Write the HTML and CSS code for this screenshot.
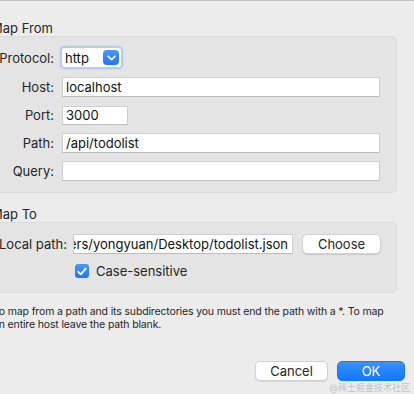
FILE: index.html
```html
<!DOCTYPE html>
<html>
<head>
<meta charset="utf-8">
<link rel="stylesheet" href="styles.css">
</head>
<body>
<div class="dialog">
  <div class="section-title">Map From</div>
  <div class="group">
    <div class="form from">
      <label class="lbl">Protocol:</label>
      <div class="field">
        <div class="select">
          <span class="select-val">http</span>
          <span class="select-btn">
            <svg width="9" height="6" viewBox="0 0 9 6"><path d="M1 1.2 L4.5 4.6 L8 1.2" fill="none" stroke="#fff" stroke-width="1.6" stroke-linecap="round" stroke-linejoin="round"/></svg>
          </span>
        </div>
      </div>
      <label class="lbl">Host:</label>
      <div class="field"><div class="input">localhost</div></div>
      <label class="lbl">Port:</label>
      <div class="field"><div class="input port">3000</div></div>
      <label class="lbl">Path:</label>
      <div class="field"><div class="input">/api/todolist</div></div>
      <label class="lbl">Query:</label>
      <div class="field"><div class="input"></div></div>
    </div>
  </div>

  <div class="section-title second">Map To</div>
  <div class="group group2">
    <div class="form to">
      <label class="lbl">Local path:</label>
      <div class="field local">
        <div class="input path-input"><span class="path-text">/Users/yongyuan/Desktop/todolist.json</span></div>
        <button class="btn choose">Choose</button>
      </div>
      <span></span>
      <div class="check-row">
        <span class="checkbox">
          <svg width="10" height="9" viewBox="0 0 10 9"><path d="M1.3 4.8 L3.8 7.3 L8.7 1.6" fill="none" stroke="#fff" stroke-width="1.9" stroke-linecap="round" stroke-linejoin="round"/></svg>
        </span>
        <span class="check-label">Case-sensitive</span>
      </div>
    </div>
  </div>

  <p class="help">To map from a path and its subdirectories you must end the path with a *. To map an entire host leave the path blank.</p>

  <div class="actions">
    <button class="btn cancel">Cancel</button>
    <button class="btn ok">OK</button>
  </div>
</div>
<div class="watermark">@稀土掘金技术社区</div>
</body>
</html>
```
FILE: styles.css
```css
html, body {
  margin: 0;
  padding: 0;
}
body {
  width: 414px;
  height: 394px;
  overflow: hidden;
  background: #ececec;
  font-family: "Inter", "Noto Sans", "Noto Sans CJK SC", sans-serif;
  font-size: 13px;
  color: #1d1d1d;
  position: relative;
  border-top: 1px solid #c4c4c4;
  box-sizing: border-box;
}
.dialog {
  width: 434px;
  margin-left: -20px;
  padding-top: 19px;
}
.section-title {
  margin-left: 11px;
  height: 16px;
  line-height: 16px;
  font-size: 13px;
  color: #262626;
}
.section-title.second {
  margin-top: 13px;
}
.group {
  margin-left: 10px;
  width: 407px;
  box-sizing: border-box;
  background: #e4e4e4;
  border: 1px solid #dadada;
  border-radius: 5px;
  padding: 9px 16px 11px 8px;
}
.group2 {
  padding-top: 11px;
  padding-bottom: 13px;
}
.form {
  display: grid;
  column-gap: 8px;
  row-gap: 8px;
  align-items: center;
}
.form.from {
  grid-template-columns: 55px 1fr;
  grid-template-rows: 23px 20px 20px 20px 20px;
}
.form.to {
  grid-template-columns: 66px 1fr;
  grid-template-rows: 20px 16px;
  column-gap: 8px;
  row-gap: 9px;
}
.lbl {
  text-align: right;
  white-space: nowrap;
  color: #262626;
  line-height: 16px;
}
.field {
  display: flex;
  align-items: center;
  height: 100%;
}
.input {
  flex: 1;
  height: 20px;
  box-sizing: border-box;
  background: #fff;
  border: 1px solid #cfcfcf;
  border-bottom-color: #bcbcbc;
  padding: 0 3px;
  line-height: 18px;
  white-space: nowrap;
  overflow: hidden;
  color: #111;
}
.input.port {
  flex: 0 0 66px;
  height: 19px;
  line-height: 17px;
}
.select {
  margin-left: -2px;
  width: 63px;
  height: 23px;
  box-sizing: border-box;
  background: #fff;
  border: 2px solid #b6cbee;
  border-radius: 5px;
  display: flex;
  align-items: center;
  justify-content: space-between;
  padding: 0 2px 0 3px;
  box-shadow: 0 0 0 1px #d0dcf0;
}
.select-val {
  color: #111;
  line-height: 16px;
}
.select-btn {
  width: 16px;
  height: 15px;
  border-radius: 4px;
  background: linear-gradient(#4b97fb, #2475f2);
  display: flex;
  align-items: center;
  justify-content: center;
}
.local {
  gap: 9px;
}
.path-input {
  flex: 0 0 220px;
  position: relative;
  padding: 0;
  direction: rtl;
  text-align: left;
}
.path-text {
  direction: ltr;
  unicode-bidi: embed;
  display: inline-block;
  padding-right: 4px;
}
.btn {
  font-family: inherit;
  font-size: 13px;
  border-radius: 5px;
  box-sizing: border-box;
  padding: 0;
  cursor: default;
}
.choose {
  width: 79px;
  height: 20px;
  background: #fff;
  border: 1px solid #d2d2d2;
  box-shadow: 0 1px 1px rgba(0,0,0,0.12);
  color: #262626;
  line-height: 18px;
}
.check-row {
  display: flex;
  align-items: center;
  gap: 7px;
  padding-left: 2px;
}
.checkbox {
  width: 14px;
  height: 14px;
  border-radius: 3px;
  background: linear-gradient(#4b97fb, #2475f2);
  display: flex;
  align-items: center;
  justify-content: center;
}
.check-label {
  color: #262626;
  line-height: 16px;
}
.help {
  margin: 12px 0 0 13px;
  width: 393px;
  font-size: 10.5px;
  letter-spacing: -0.15px;
  line-height: 13px;
  color: #262626;
}
.actions {
  display: flex;
  justify-content: flex-end;
  gap: 9px;
  margin-top: 30px;
  padding-right: 9px;
}
.cancel {
  width: 73px;
  height: 20px;
  background: #fff;
  border: 1px solid #d0d0d0;
  box-shadow: 0 1px 1px rgba(0,0,0,0.1);
  color: #262626;
  line-height: 18px;
}
.ok {
  width: 68px;
  height: 20px;
  background: linear-gradient(#3a92fd, #1378f7);
  border: 1px solid #1a78f0;
  color: #fff;
  line-height: 18px;
}
.watermark {
  position: absolute;
  right: 4px;
  bottom: 0;
  font-size: 9px;
  line-height: 12px;
  color: rgba(150, 150, 150, 0.5);
}
```
